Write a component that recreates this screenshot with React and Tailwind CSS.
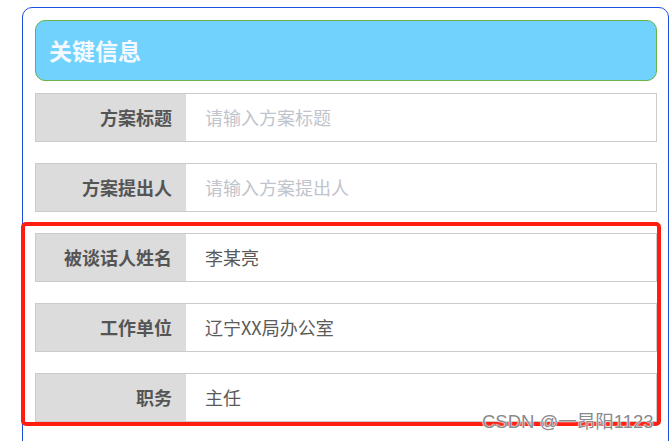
import React from "react";

const rows = [
  { label: "方案标题", value: "", placeholder: "请输入方案标题" },
  { label: "方案提出人", value: "", placeholder: "请输入方案提出人" },
  { label: "被谈话人姓名", value: "李某亮" },
  { label: "工作单位", value: "辽宁XX局办公室" },
  { label: "职务", value: "主任" },
];

const FormRow = ({ label, value, placeholder }) => (
  <div className="flex h-[49px] border border-[#cbcbcb] mt-[21px] first:mt-0">
    <div className="w-[150px] shrink-0 bg-[#dcdcdc] flex items-center justify-end pr-[14px] text-[18px] font-bold text-[#555555]">
      {label}
    </div>
    <div className="flex-1 flex items-center pl-[19px] text-[18px]">
      {value ? (
        <span className="text-[#5a5a5a]">{value}</span>
      ) : (
        <span className="text-[#c0c4cc]">{placeholder}</span>
      )}
    </div>
  </div>
);

export default function App() {
  return (
    <div
      className="relative h-[441px] w-[670px] overflow-hidden bg-white pt-[7px] pl-[22px]"
      style={{ fontFamily: '"Noto Sans CJK SC", "Liberation Sans", sans-serif' }}
    >
      {/* outer card */}
      <div className="w-[647px] h-[470px] border border-[#1d4ee0] rounded-[10px] pt-[12px] pl-[12px] pr-[11px]">
        {/* header */}
        <div className="h-[61px] bg-[#72d2fe] border border-[#68b34a] rounded-[10px] flex items-center pl-[13px]">
          <span className="text-[23px] font-bold text-[#f4faff]">关键信息</span>
        </div>

        <div className="mt-[12px] flex flex-col">
          {rows.map((r, i) => (
            <FormRow key={i} {...r} />
          ))}
        </div>
      </div>

      {/* red annotation box */}
      <div className="absolute left-[21px] top-[222px] w-[640px] h-[204px] border-4 border-[#ff1d12] rounded-[5px]" />

      {/* watermark */}
      <div
        className="absolute left-[482px] top-[408px] text-[18.5px] text-[#8a8a8a] [text-shadow:0_0_1px_#fff,0_0_1px_#fff,0_0_2px_#fff]"
        style={{ fontFamily: '"Liberation Sans", "Noto Sans CJK SC", sans-serif' }}
      >
        CSDN @一昂阳1123
      </div>
    </div>
  );
}
